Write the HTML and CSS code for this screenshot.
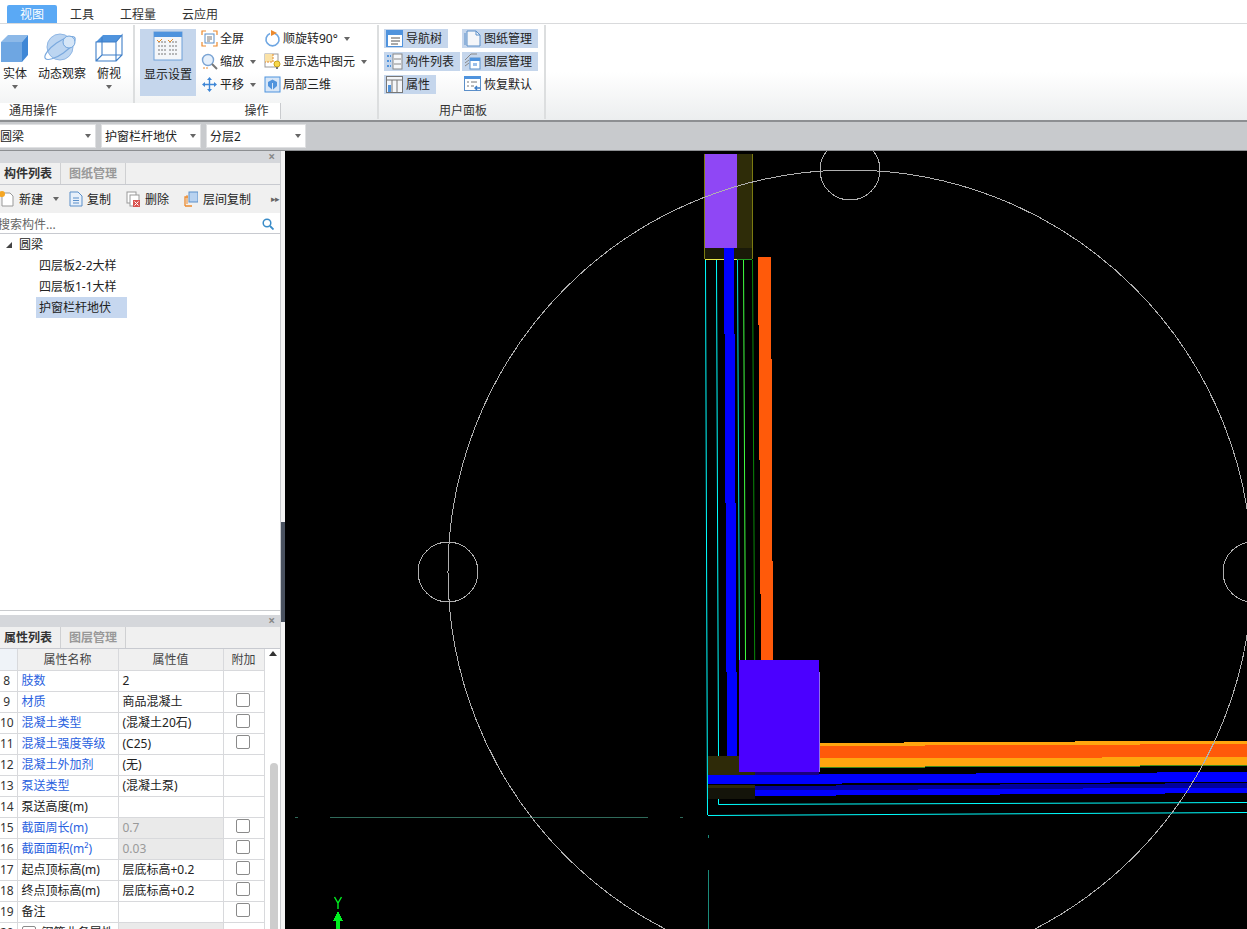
FILE: index.html
```html
<!DOCTYPE html>
<html lang="zh">
<head>
<meta charset="utf-8">
<title>视图</title>
<link rel="stylesheet" href="styles.css">
</head>
<body>
<div class="app">
  <nav class="tabbar">
    <span class="rtab active">视图</span><span class="rtab">工具</span><span class="rtab">工程量</span><span class="rtab">云应用</span>
  </nav>
  <section class="ribbon">
    <div class="group g1">
      <div class="gbody">
        <div class="big w30"><svg class="bigicon" width="30" height="30" viewBox="0 0 30 30"><path d="M1 9 8 2H28L22 9Z" fill="#8db9e8"/><path d="M22 9 28 2V22L22 29Z" fill="#3f87d6"/><rect x="1" y="9" width="21" height="20" fill="#6ea6e2"/></svg><span>实体</span><i class="caret"></i></div>
        <div class="big w48"><svg class="bigicon" width="48" height="30" viewBox="0 0 48 30"><circle cx="22" cy="14" r="13" fill="#bcd5f1" stroke="#8fb6e4"/><ellipse cx="22" cy="15" rx="18" ry="6" transform="rotate(-35 22 15)" fill="none" stroke="#7aa9de" stroke-width="1.2"/><circle cx="31" cy="9" r="6" fill="#d6e6f7" stroke="#6fa3dc"/></svg><span>动态观察</span></div>
        <div class="big w28"><svg class="bigicon" width="28" height="30" viewBox="0 0 28 30"><path d="M1 9 8 2H27L21 9Z" fill="#4f93dd"/><path d="M1 9H21V28H1ZM21 9 27 2V22L21 28M7 4V22H27M7 22 1 28" fill="none" stroke="#3f7fc8" stroke-width="1.1"/></svg><span>俯视</span><i class="caret"></i></div>
      </div>
      <div class="glabel left">通用操作</div>
    </div>
    <div class="group g2">
      <div class="gbody">
        <div class="big selected"><svg class="bigicon" width="30" height="30" viewBox="0 0 30 30"><rect x="1" y="1" width="28" height="28" fill="#f4f6f9" stroke="#6ea0d8"/><rect x="1" y="1" width="28" height="5" fill="#4f93dd"/><path d="M5 11h8M16 11h9M5 15h8M16 15h9M5 19h8M16 19h9M5 23h8M16 23h9" stroke="#777" stroke-dasharray="2 1"/><path d="M4 9l2 2 3-3M15 9l2 2 3-3" stroke="#e08a2b" fill="none"/></svg><span>显示设置</span></div>
        <div class="smallcol c1">
          <div class="sbtn"><svg class="ico" viewBox="0 0 17 17"><path d="M1 5V1H5M12 1H16V5M16 12V16H12M5 16H1V12" fill="none" stroke="#ec8a2e" stroke-width="1.2"/><rect x="4" y="4" width="9" height="9" fill="#fff" stroke="#5b8fc9"/><path d="M6 7h5M6 9h5M6 11h3" stroke="#777"/></svg><span>全屏</span></div>
          <div class="sbtn"><svg class="ico" viewBox="0 0 17 17"><circle cx="7" cy="7" r="5.5" fill="#e6f0fb" stroke="#7aa4d4" stroke-width="1.4"/><path d="M11 11 16 16" stroke="#777" stroke-width="2"/><path d="M2 15h5" stroke="#ec8a2e" stroke-dasharray="2 1"/></svg><span>缩放</span><i class="caret inl"></i></div>
          <div class="sbtn"><svg class="ico" viewBox="0 0 17 17"><path d="M8.500 1 11 4H6ZM8.500 16 6 13H11ZM1 8.500 4 6V11ZM16 8.500 13 11V6Z" fill="#3f87d6"/><path d="M8.500 4V13M4 8.500H13" stroke="#3f87d6" stroke-width="1.4"/></svg><span>平移</span><i class="caret inl"></i></div>
        </div>
        <div class="smallcol">
          <div class="sbtn"><svg class="ico" viewBox="0 0 17 17"><path d="M6 3.400A6.500 6.500 0 1 0 11 3.400" fill="none" stroke="#6ea6e2" stroke-width="1.6"/><path d="M7 0 13 3 7 6Z" fill="#ec8a2e"/></svg><span>顺旋转90°</span><i class="caret inl"></i></div>
          <div class="sbtn"><svg class="ico" viewBox="0 0 17 17"><rect x="1" y="1" width="13" height="13" fill="#fff" stroke="#999"/><rect x="1" y="1" width="8" height="8" fill="#fbe2a6"/><path d="M9 1v8H1" stroke="#e08a2b" fill="none" stroke-dasharray="2 1"/><circle cx="13" cy="11" r="3" fill="#f7d84a" stroke="#c9a21c"/><path d="M12 15h2" stroke="#777" stroke-width="2"/></svg><span>显示选中图元</span><i class="caret inl"></i></div>
          <div class="sbtn"><svg class="ico" viewBox="0 0 17 17"><rect x="1" y="1" width="15" height="15" fill="#d7e6f7" stroke="#4f93dd"/><path d="M8.500 3.500 13 6V10L8.500 14 4 10V6Z" fill="#4f93dd"/><path d="M8.500 7V14" stroke="#d7e6f7"/></svg><span>局部三维</span></div>
        </div>
      </div>
      <div class="glabel l2">操作</div>
    </div>
    <div class="group g3">
      <div class="gbody">
        <div class="panelcol pc1">
          <div class="pbtn on"><svg class="ico" viewBox="0 0 17 17"><rect x="0" y="0" width="17" height="17" fill="#4f93dd"/><rect x="2" y="5" width="14" height="11" fill="#fff"/><path d="M5 8h9M5 11h9M5 14h7" stroke="#555"/></svg><span>导航树</span></div>
          <div class="pbtn on"><svg class="ico" viewBox="0 0 17 17"><rect x="7" y="1" width="9" height="15" fill="#f4f6f9" stroke="#888"/><path d="M8 6h7M8 11h7" stroke="#888"/><path d="M1 3h4M1 8h4M1 13h4" stroke="#4f93dd" stroke-width="2" stroke-dasharray="2 1"/></svg><span>构件列表</span></div>
          <div class="pbtn on"><svg class="ico" viewBox="0 0 17 17"><rect x="0.500" y="0.500" width="16" height="16" fill="#f4f6f9" stroke="#777"/><path d="M1 4h15M6 4v12M11 4v12" stroke="#777"/><rect x="2" y="9" width="3" height="7" fill="#4f93dd"/></svg><span>属性</span></div>
        </div>
        <div class="panelcol">
          <div class="pbtn on"><svg class="ico" viewBox="0 0 17 17"><path d="M3 1H12L16 5V16H3Z" fill="#f4f6f9" stroke="#5b8fc9"/><path d="M1 3V15" stroke="#5b8fc9"/><path d="M12 1V5H16" fill="none" stroke="#5b8fc9"/></svg><span>图纸管理</span></div>
          <div class="pbtn on"><svg class="ico" viewBox="0 0 17 17"><path d="M1 7 7 1H13M1 10 5 7M1 13 5 10" fill="none" stroke="#888"/><rect x="6" y="5" width="10" height="11" fill="#fff" stroke="#5b8fc9"/><rect x="6" y="5" width="10" height="3" fill="#4f93dd"/><rect x="9" y="10" width="4" height="3" fill="#9cc0ea"/></svg><span>图层管理</span></div>
          <div class="pbtn"><svg class="ico" viewBox="0 0 17 17"><rect x="0.500" y="0.500" width="16" height="14" fill="#fff" stroke="#5b8fc9"/><rect x="0" y="0" width="17" height="3" fill="#4f93dd"/><path d="M3 6h2M7 6h6M3 10h2M7 10h3" stroke="#777"/><path d="M16 12H11M13 10 11 12 13 14" fill="none" stroke="#3f7fc8" stroke-width="1.4"/></svg><span>恢复默认</span></div>
        </div>
      </div>
      <div class="glabel l3">用户面板</div>
    </div>
  </section>
  <section class="combobar">
    <div class="combo c-a"><span>圆梁</span><i class="caret"></i></div>
    <div class="combo c-b"><span>护窗栏杆地伏</span><i class="caret"></i></div>
    <div class="combo c-c"><span>分层2</span><i class="caret"></i></div>
  </section>
  <main class="workspace">
    <aside class="left">
      <section class="upper">
        <header class="phead"><span class="close">×</span></header>
        <div class="ptabs"><span class="ptab active">构件列表</span><span class="ptab">图纸管理</span></div>
        <div class="ptools">
          <div class="tool t-new"><svg class="tico" viewBox="0 0 14 16"><path d="M2 2H10L13 5V15H2Z" fill="#fff" stroke="#999"/><circle cx="2" cy="3" r="3" fill="#f5a623"/></svg><span>新建</span><i class="caret"></i></div>
          <div class="tool t-copy"><svg class="tico" viewBox="0 0 14 16"><path d="M1 1H9L13 5V15H1Z" fill="#e8f0fa" stroke="#5b8fc9"/><path d="M4 7h6M4 9.500h6M4 12h6" stroke="#5b8fc9"/></svg><span>复制</span></div>
          <div class="tool t-del"><svg class="tico" viewBox="0 0 14 16"><rect x="1" y="1" width="9" height="11" fill="#fff" stroke="#999"/><rect x="4" y="4" width="9" height="11" fill="#fff" stroke="#999"/><rect x="7" y="9" width="7" height="7" fill="#d9534f"/><path d="M8.500 10.500 12.500 14.500M12.500 10.500 8.500 14.500" stroke="#fff"/></svg><span>删除</span></div>
          <div class="tool t-floor"><svg class="tico" viewBox="0 0 14 16"><path d="M1 15V6H4M1 15H8" fill="none" stroke="#ec8a2e" stroke-width="1.300"/><path d="M3 13V4" stroke="#ec8a2e"/><rect x="5" y="1" width="9" height="10" fill="#b8d2f0" stroke="#5b8fc9"/></svg><span>层间复制</span></div>
          <span class="more">▸▸</span>
        </div>
        <div class="psearch"><span>搜索构件...</span><svg class="sico" viewBox="0 0 12 12"><circle cx="5" cy="5" r="3.800" fill="none" stroke="#3a8cc8" stroke-width="1.500"/><path d="M8 8 11.500 11.500" stroke="#3a8cc8" stroke-width="1.800"/></svg></div>
        <div class="tree">
          <div class="troot"><i class="tri"></i><span>圆梁</span></div>
          <div class="tleaf"><span>四层板2-2大样</span></div>
          <div class="tleaf"><span>四层板1-1大样</span></div>
          <div class="tleaf sel"><span>护窗栏杆地伏</span></div>
        </div>
      </section>
      <section class="lower">
        <header class="phead"><span class="close">×</span></header>
        <div class="ptabs"><span class="ptab active">属性列表</span><span class="ptab">图层管理</span></div>
        <div class="gridwrap">
          <table class="props">
            <colgroup><col class="cn"><col class="cname"><col class="cval"><col class="cadd"></colgroup>
            <thead><tr><th></th><th>属性名称</th><th>属性值</th><th>附加</th></tr></thead>
            <tbody>
              <tr><td class="n">8</td><td class="link">肢数</td><td>2</td><td></td></tr>
              <tr><td class="n">9</td><td class="link">材质</td><td>商品混凝土</td><td><i class="cb"></i></td></tr>
              <tr><td class="n">10</td><td class="link">混凝土类型</td><td>(混凝土20石)</td><td><i class="cb"></i></td></tr>
              <tr><td class="n">11</td><td class="link">混凝土强度等级</td><td>(C25)</td><td><i class="cb"></i></td></tr>
              <tr><td class="n">12</td><td class="link">混凝土外加剂</td><td>(无)</td><td></td></tr>
              <tr><td class="n">13</td><td class="link">泵送类型</td><td>(混凝土泵)</td><td></td></tr>
              <tr><td class="n">14</td><td>泵送高度(m)</td><td></td><td></td></tr>
              <tr><td class="n">15</td><td class="link">截面周长(m)</td><td class="ro">0.7</td><td><i class="cb"></i></td></tr>
              <tr><td class="n">16</td><td class="link">截面面积(m²)</td><td class="ro">0.03</td><td><i class="cb"></i></td></tr>
              <tr><td class="n">17</td><td>起点顶标高(m)</td><td>层底标高+0.2</td><td><i class="cb"></i></td></tr>
              <tr><td class="n">18</td><td>终点顶标高(m)</td><td>层底标高+0.2</td><td><i class="cb"></i></td></tr>
              <tr><td class="n">19</td><td>备注</td><td></td><td><i class="cb"></i></td></tr>
              <tr><td class="n">20</td><td class="grp"><i class="cb plain"></i>钢筋业务属性</td><td class="ro"></td><td></td></tr>
            </tbody>
          </table>
          <div class="scroll"><i class="up"></i><i class="thumb"></i></div>
        </div>
      </section>
    </aside>
    <div class="splitter"><i class="grip"></i></div>
    <svg class="canvas" viewBox="285 151 962 778" width="962" height="778" shape-rendering="crispEdges">
      <rect x="285" y="151" width="962" height="778" fill="#000"/>
      <!-- top column -->
      <rect x="737" y="154" width="15" height="94" fill="#2e2c08"/>
      <rect x="705" y="154" width="32" height="94" fill="#8f47f5"/>
      <rect x="705" y="248" width="47" height="11" fill="#1a1a08"/>
      <path d="M704.500 154V259M752.500 154V259" stroke="#7a7a10"/>
      <path d="M705 259.500H737" stroke="#e8e84a"/>
      <path d="M737 259.500H752" stroke="#1f9a1f"/>
      <!-- vertical lines, slightly skewed as in the drawing -->
      <g fill="none" shape-rendering="auto">
        <path d="M705.500 260 707.500 815" stroke="#00ffff"/>
        <path d="M716.500 260 718.500 756" stroke="#00ffff"/>
        <path d="M737.500 260 739.500 660" stroke="#00e0e0"/>
        <path d="M743.500 260 745.500 660" stroke="#40ff40"/>
        <path d="M752.500 260 754.700 660" stroke="#0a8a0a"/>
      </g>
      <polygon points="724,248 734,248 737,756 727,756" fill="#0000ff"/>
      <polygon points="758,257 771,257 773,660 761,660" fill="#ff5a0a"/>
      <!-- lower-left dark pads -->
      <rect x="708" y="756" width="31" height="16" fill="#2e2a08"/>
      <rect x="708" y="772" width="47" height="3" fill="#2e2a08"/>
      <rect x="708" y="785" width="47" height="3" fill="#2e2a08"/>
      <rect x="708" y="788" width="47" height="11" fill="#14140a"/>
      <!-- horizontal bands -->
      <polygon points="819,743 1247,740.500 1247,765 819,767" fill="#ffa60f"/>
      <polygon points="819,746 1247,744 1247,757 819,758.500" fill="#ff5a0a"/>
      <path d="M819 767.500 1247 765.500" stroke="#3f8a1a"/>
      <polygon points="708,775 1247,772 1247,782 708,784" fill="#0000ff"/>
      <polygon points="755,786 1247,783 1247,793 755,796" fill="#0000ff"/>
      <polygon points="755,786 1247,783 1247,787.500 755,790.500" fill="#0000a0"/>
      <!-- big column -->
      <rect x="755" y="772" width="64" height="3" fill="#1a0080"/>
      <rect x="739" y="660" width="80" height="112" fill="#4b00ff"/>
      <path d="M819.500 672V772" stroke="#8f6fe8"/>
      <!-- footing outlines -->
      <path d="M708 815.500 1247 812.500" stroke="#00ffff" shape-rendering="auto"/>
      <path d="M718.500 799V804.500L1247 802.500" stroke="#00ffff" fill="none" shape-rendering="auto"/>
      <path d="M708.500 835V838M708.500 870V929" stroke="#1a8a7a"/>
      <!-- axis -->
      <path d="M295 817.500H298M330 817.500H648M680 817.500H683" stroke="#2f6a5a"/>
      <path d="M334.500 897 338 903 341.500 897M338 903V909" stroke="#00f020" fill="none" stroke-width="1.400" shape-rendering="auto"/>
      <path d="M338 911 333 921H336V929H340V921H343Z" fill="#00f020"/>
      <!-- circles -->
      <g fill="none" stroke="#b0b0b0">
        <circle cx="850" cy="572" r="402"/>
        <circle cx="448" cy="572" r="30"/>
        <circle cx="850" cy="170" r="30"/>
        <circle cx="1253" cy="572" r="30"/>
      </g>
    </svg>
  </main>
</div>
</body>
</html>
```

FILE: styles.css
```css
* { box-sizing: border-box; }
html, body { margin: 0; padding: 0; height: 929px; overflow: hidden; }
body { font: 12px/16px "Noto Sans", "Noto Sans CJK SC", "Liberation Sans", sans-serif; color: #222; background: #000; }
i { display: block; font-style: normal; }
svg { display: block; flex: none; }
.app { width: 1247px; height: 929px; display: flex; flex-direction: column; overflow: hidden; }

.tabbar { height: 24px; background: #fff; border-bottom: 1px solid #d9dadc; padding: 5px 0 0 7px; display: flex; flex: none; }
.rtab { height: 18px; line-height: 20px; text-align: center; width: 50px; color: #333; }
.rtab:nth-child(3) { width: 62px; }
.rtab:nth-child(4) { width: 62px; }
.rtab.active { background: #5aa9f5; color: #fff; border-radius: 2px 2px 0 0; }

.ribbon { height: 98px; display: flex; flex: none; background: linear-gradient(#fff 0, #fff 50%, #eceeef 100%); border-bottom: 2px solid #8d8f92; }
.group { display: flex; flex-direction: column; border-right: 2px solid #dcdedf; height: 94px; margin-top: 1px; }
.g1 { width: 135px; }
.g2 { width: 244px; padding-left: 5px; }
.g3 { width: 167px; padding-left: 5px; }
.gbody { height: 78px; padding-top: 4px; display: flex; flex: none; }
.glabel { text-align: center; line-height: 16px; height: 16px; color: #333; }
.glabel.left { text-align: left; padding-left: 9px; }
.glabel.l2 { padding-right: 4px; }
.glabel.l3 { padding-right: 2px; }

.big { display: flex; flex-direction: column; align-items: center; position: relative; }
.big span { display: block; line-height: 16px; margin-top: 3px; white-space: nowrap; }
.bigicon { margin-top: 4px; }
.w30 { width: 30px; margin-right: 8px; }
.w48 { width: 48px; margin-right: 9px; }
.w28 { width: 28px; }
.big.selected { width: 56px; height: 67px; background: #c5d6ec; margin-right: 5px; }
.big.selected .bigicon { margin-top: 2px; }
.big.selected span { margin-top: 6px; }
.caret { width: 0; height: 0; border-left: 3.500px solid transparent; border-right: 3.500px solid transparent; border-top: 4px solid #666; }
.big .caret { margin-top: 3px; }
.caret.inl { margin-left: 4px; }

.smallcol { display: flex; flex-direction: column; gap: 2px; margin-top: -1px; }
.c1 { width: 63px; }
.sbtn { height: 21px; display: flex; align-items: center; gap: 2px; white-space: nowrap; }
.ico { width: 17px; height: 17px; }

.panelcol { display: flex; flex-direction: column; align-items: flex-start; gap: 4px; }
.pc1 { width: 78px; }
.pbtn { height: 19px; display: flex; align-items: center; gap: 3px; padding: 0 6px 0 2px; white-space: nowrap; }
.pbtn.on { background: #c5d6ec; }

.combobar { height: 29px; flex: none; background: #c8cacd; border-bottom: 1px solid #8d8f92; padding-top: 2px; display: flex; }
.combo { height: 24px; background: #fff; border: 1px solid #dfe0e2; display: flex; align-items: center; justify-content: space-between; padding: 0 4px 0 3px; }
.combo span { margin-top: 2px; }
.c-a { width: 96px; padding-left: 0; border-left: 0; margin-right: 5px; }
.c-b { width: 100px; margin-right: 5px; }
.c-c { width: 100px; }

.workspace { flex: 1; display: flex; min-height: 0; }
.left { width: 281px; background: #fff; border-right: 1px solid #c9cbce; display: flex; flex-direction: column; flex: none; }
.upper { height: 460px; display: flex; flex-direction: column; border-bottom: 1px solid #c9cbce; flex: none; }
.lower { margin-top: 4px; flex: 1; display: flex; flex-direction: column; min-height: 0; }
.phead { height: 12px; background: #d5d7db; position: relative; flex: none; }
.close { position: absolute; right: 5px; top: -1px; line-height: 14px; font-size: 12px; color: #888; font-weight: 700; }
.ptabs { height: 22px; display: flex; background: #f0f0f0; border-bottom: 1px solid #c8cad0; flex: none; }
.ptab { height: 21px; line-height: 22px; font-weight: 700; color: #999; padding: 0 8px; width: 65px; background: #eee; border-right: 1px solid #cfd0d2; white-space: nowrap; }
.ptab.active { color: #333; width: 61px; padding-left: 4px; background: #f0f0f0; border-right: 1px solid #cfd0d2; }

.ptools { height: 28px; background: #f0f0f0; display: flex; align-items: center; position: relative; flex: none; }
.tool { display: flex; align-items: center; gap: 5px; }
.tool span { margin-top: 2px; }
.tico { width: 14px; height: 16px; }
.t-new { width: 69px; }
.t-new .caret { margin-left: 5px; }
.t-copy { width: 57px; gap: 4px; }
.t-del { width: 58px; }
.more { position: absolute; right: 1px; top: 6px; color: #666; font-size: 9px; letter-spacing: -1px; }

.psearch { height: 20px; margin-top: 1px; background: #fff; border-bottom: 1px solid #c8cad0; display: flex; align-items: center; justify-content: space-between; padding-right: 6px; color: #666; flex: none; overflow: hidden; }
.psearch span { margin: 2px 0 0 -2px; }
.sico { width: 12px; height: 12px; }

.tree { flex: 1; }
.troot { height: 21px; display: flex; align-items: center; padding-left: 6px; }
.tri { width: 0; height: 0; border-left: 6px solid transparent; border-bottom: 6px solid #444; margin-right: 7px; }
.tleaf { height: 21px; margin-left: 36px; padding-left: 3px; line-height: 21px; width: 91px; white-space: nowrap; }
.tleaf.sel { background: #c6d7ef; }

.gridwrap { flex: 1; display: flex; min-height: 0; overflow: hidden; }
.props { width: 264px; border-collapse: collapse; table-layout: fixed; flex: none; align-self: flex-start; }
.cn { width: 17px; } .cname { width: 101px; } .cval { width: 105px; } .cadd { width: 41px; }
.props th, .props td { height: 21px; padding: 0 0 0 4px; border: 1px solid #d8d9dc; border-top: 0; font-weight: 400; white-space: nowrap; overflow: hidden; text-align: left; line-height: 18px; }
.props th:first-child, .props td:first-child { border-left: 0; }
.props th { background: #f0f0f0; text-align: center; color: #444; padding: 2px 0 0; line-height: 18px; }
.props th:first-child { background: #eff3f8; }
.props td.n { padding: 0 3px 0 0; text-align: center; color: #333; }
.props td.link { color: #2a62e0; }
.props td.ro { background: #eaeaea; color: #999; }
.cb { width: 14px; height: 14px; border: 1px solid #8a8a8a; border-radius: 2px; background: #fff; margin: 0 auto 4px 8px; }
.cb.plain { display: inline-block; vertical-align: middle; margin: 0 6px 0 0; }
.scroll { flex: 1; background: #fff; position: relative; }
.up { position: absolute; left: 4px; top: 2px; width: 0; height: 0; border-left: 4.500px solid transparent; border-right: 4.500px solid transparent; border-bottom: 5px solid #333; }
.thumb { position: absolute; left: 5px; top: 114px; width: 8px; height: 200px; background: #cdcdcd; border-radius: 4px 4px 0 0; }

.splitter { width: 4px; background: #f4f4f4; position: relative; flex: none; }
.grip { position: absolute; left: 0; top: 371px; width: 4px; height: 100px; background: #4a5260; }
.canvas { flex: none; }
```
